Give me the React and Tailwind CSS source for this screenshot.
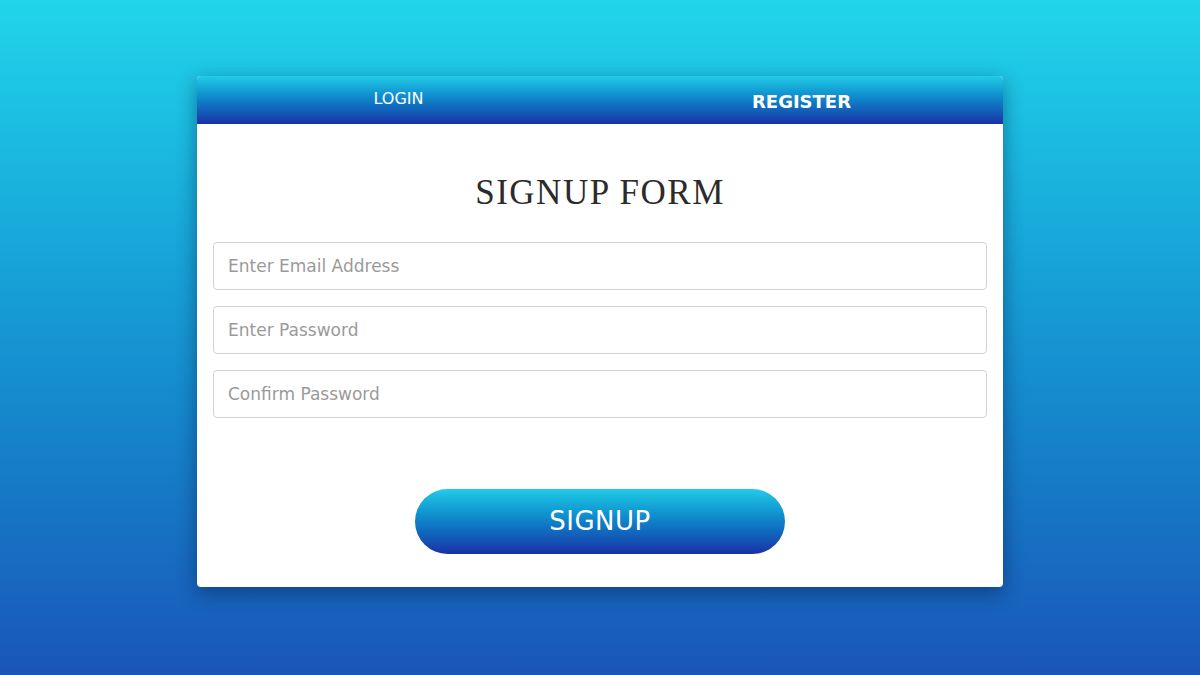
import React from 'react';

const inputs = ['Enter Email Address', 'Enter Password', 'Confirm Password'];

export default function App() {
  return (
    <div className="w-[1200px] h-[675px] bg-gradient-to-b from-[#22d5ea] to-[#1a55b7] flex justify-center pt-[76px] font-['DejaVu_Sans',sans-serif]">
      <div className="w-[806px] h-[511px] bg-white rounded-[4px] shadow-[0_6px_20px_rgba(0,20,60,0.45)] overflow-hidden flex flex-col">
        {/* Tabs */}
        <div className="h-[48px] bg-gradient-to-b from-[#22cce6] to-[#1a30a6] grid grid-cols-2 text-white">
          <div className="flex items-center justify-center text-[16px] pb-[3px]">LOGIN</div>
          <div className="flex items-center justify-center text-[18px] font-bold pt-[3px]">REGISTER</div>
        </div>

        <div className="flex flex-col px-[16px] pt-[49px]">
          <h1 className="text-center text-[35px] leading-[40px] tracking-[1.5px] text-[#2b2b2b] font-['Liberation_Serif',serif] mb-[29px]">
            SIGNUP FORM
          </h1>

          <div className="flex flex-col gap-[16px]">
            {inputs.map((p) => (
              <input
                key={p}
                placeholder={p}
                className="h-[48px] w-full border border-[#d2d2d2] rounded-[4px] px-[14px] text-[17px] text-[#555] placeholder:text-[#9a9a9a] outline-none"
              />
            ))}
          </div>

          <div className="flex justify-center pt-[71px]">
            <button className="w-[370px] h-[65px] rounded-full bg-gradient-to-b from-[#22cce6] to-[#1a30a6] text-white text-[26px] tracking-[0.5px]">
              SIGNUP
            </button>
          </div>
        </div>
      </div>
    </div>
  );
}
